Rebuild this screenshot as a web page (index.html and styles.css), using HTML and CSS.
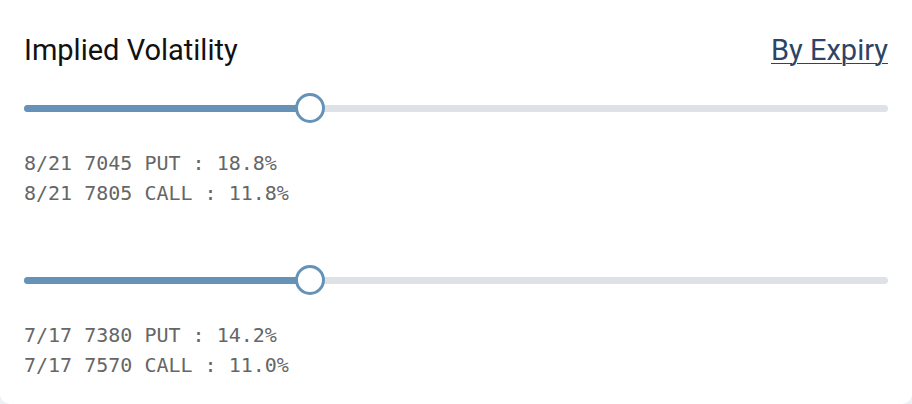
FILE: index.html
```html
<!DOCTYPE html>
<html lang="en">
<head>
  <meta charset="UTF-8" />
  <title>Implied Volatility</title>
  <link rel="stylesheet" href="styles.css">
</head>
<body>
  <div class="card">
    <div class="card-head">
      <h2>Implied Volatility</h2>
      <a href="#" class="toggle">By Expiry</a>
    </div>

    <div class="iv-group">
      <div class="slider">
        <div class="track"><div class="fill" style="width: 33.1%;"></div></div>
        <div class="thumb" style="left: 33.1%;"></div>
      </div>
      <div class="quotes">
        <div>8/21 7045 PUT : 18.8%</div>
        <div>8/21 7805 CALL : 11.8%</div>
      </div>
    </div>

    <div class="iv-group">
      <div class="slider">
        <div class="track"><div class="fill" style="width: 33.1%;"></div></div>
        <div class="thumb" style="left: 33.1%;"></div>
      </div>
      <div class="quotes">
        <div>7/17 7380 PUT : 14.2%</div>
        <div>7/17 7570 CALL : 11.0%</div>
      </div>
    </div>
  </div>
</body>
</html>
```

FILE: styles.css
```css
body {
  margin: 0;
  background: #eef0f2;
  font-family: Roboto, "Noto Sans", sans-serif;
}
.card {
  box-sizing: border-box;
  height: 404px;
  background: #fff;
  border-radius: 0 0 10px 10px;
  padding: 34px 24px 0;
}
.card-head {
  display: flex;
  justify-content: space-between;
  align-items: baseline;
}
.card-head h2 {
  margin: 0;
  font-size: 29px;
  font-weight: 400;
  line-height: 32px;
  color: #111;
}
.toggle {
  font-size: 29px;
  line-height: 32px;
  color: #2e4366;
  text-decoration: underline;
  text-underline-offset: 3px;
  text-decoration-thickness: 1px;
}
.iv-group {
  margin-top: 27px;
}
.iv-group + .iv-group {
  margin-top: 57px;
}
.slider {
  position: relative;
  height: 30px;
  display: flex;
  align-items: center;
}
.track {
  flex: 1;
  height: 7px;
  border-radius: 4px;
  background: #dee1e5;
  overflow: hidden;
}
.fill {
  height: 100%;
  background: #6592b6;
}
.thumb {
  position: absolute;
  top: 0;
  box-sizing: border-box;
  width: 30px;
  height: 30px;
  margin-left: -15px;
  border: 3px solid #6592b6;
  border-radius: 50%;
  background: #fff;
}
.quotes {
  margin-top: 25px;
  font-family: "DejaVu Sans Mono", "Liberation Mono", monospace;
  font-size: 20px;
  line-height: 30px;
  color: #666;
}
```
